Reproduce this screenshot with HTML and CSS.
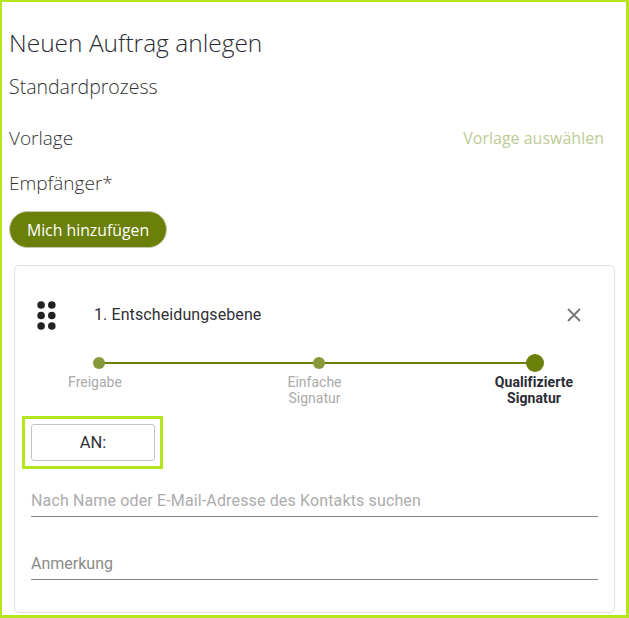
FILE: index.html
```html
<!DOCTYPE html>
<html lang="de">
<head>
<meta charset="utf-8">
<title>Neuen Auftrag anlegen</title>
<link rel="stylesheet" href="styles.css">
</head>
<body>
<main class="frame">
  <h1 class="title">Neuen Auftrag anlegen</h1>
  <h2 class="subtitle">Standardprozess</h2>
  <div class="template-row">
    <span class="label">Vorlage</span>
    <a class="template-link">Vorlage auswählen</a>
  </div>
  <div class="label recipients">Empfänger*</div>
  <button class="add-me" type="button">Mich hinzufügen</button>
  <section class="card">
    <header class="card-head">
      <svg class="drag" width="19" height="29" viewBox="0 0 19 29" aria-hidden="true">
        <circle cx="4.1" cy="4" r="3.8"/><circle cx="14.8" cy="4" r="3.8"/>
        <circle cx="4.1" cy="14.5" r="3.8"/><circle cx="14.8" cy="14.5" r="3.8"/>
        <circle cx="4.1" cy="25" r="3.8"/><circle cx="14.8" cy="25" r="3.8"/>
      </svg>
      <span class="level-name">1. Entscheidungsebene</span>
      <svg class="close" width="16" height="16" viewBox="0 0 16 16" aria-hidden="true">
        <path d="M2 2 14 14M14 2 2 14"/>
      </svg>
    </header>
    <div class="stepper">
      <div class="track"></div>
      <div class="step step-first"><span class="dot"></span><span class="step-label">Freigabe</span></div>
      <div class="step step-mid"><span class="dot"></span><span class="step-label">Einfache<br>Signatur</span></div>
      <div class="step active"><span class="dot"></span><span class="step-label">Qualifizierte<br>Signatur</span></div>
    </div>
    <div class="highlight"><button class="to-btn" type="button">AN:</button></div>
    <div class="field search">Nach Name oder E-Mail-Adresse des Kontakts suchen</div>
    <div class="field note">Anmerkung</div>
  </section>
</main>
</body>
</html>
```
FILE: styles.css
```css
* { box-sizing: border-box; }
html, body { margin: 0; padding: 0; background: #fff; }
body { width: 629px; height: 618px; overflow: hidden; }
.frame {
  width: 629px;
  height: 618px;
  border: solid #b5e61d;
  border-width: 2px 3px 3px 2px;
  padding: 0 11px 0 7px;
  font-family: "Open Sans", sans-serif;
  font-weight: 300;
  color: #333;
}
.title {
  margin: 24px 0 0;
  font-size: 24.5px;
  line-height: 33px;
  font-weight: 300;
  color: #2b2b33;
}
.subtitle {
  margin: 15px 0 0;
  font-size: 19.5px;
  line-height: 26px;
  font-weight: 300;
  color: #333;
}
.template-row {
  margin-top: 26px;
  padding-right: 11px;
  display: flex;
  justify-content: space-between;
  align-items: center;
}
.label { font-size: 19px; line-height: 25px; font-weight: 300; color: #333; }
.template-link { font-size: 16px; line-height: 25px; font-weight: 400; color: #bccb95; }
.recipients { margin-top: 20px; }
.add-me {
  display: block;
  margin-top: 15px;
  width: 158px;
  height: 37px;
  padding: 0;
  border: 1px solid #c4c8b4;
  border-radius: 19px;
  background: #6a8008;
  color: #fff;
  font-family: "Open Sans", sans-serif;
  font-size: 15.8px;
  font-weight: 500;
}
.card {
  margin: 17px 0 0 5px;
  width: 601px;
  height: 348px;
  border: 1px solid #e0e0e0;
  border-radius: 5px;
  padding: 35px 16px 0;
  font-family: Roboto, sans-serif;
  font-weight: 400;
}
.card-head { display: flex; align-items: center; height: 28px; padding: 0 0 0 6px; }
.drag { fill: #222; flex: none; align-self: flex-start; }
.level-name { margin: 0 0 2px 38px; font-size: 16px; letter-spacing: .1px; color: #2f2f36; }
.close { margin-left: auto; margin-right: 16px; fill: none; stroke: #777; stroke-width: 1.8; }
.stepper {
  position: relative;
  display: flex;
  justify-content: space-between;
  margin: 25px 0 0 18px;
  width: 536px;
}
.track {
  position: absolute;
  left: 50px;
  right: 50px;
  top: 8px;
  height: 2px;
  background: #6a8008;
}
.step {
  position: relative;
  width: 100px;
  display: flex;
  flex-direction: column;
  align-items: center;
  font-size: 14px;
  line-height: 16px;
  text-align: center;
  color: #aaa;
}
.step-mid { width: 62px; margin-left: 4px; }
.step .dot {
  width: 12px;
  height: 12px;
  margin: 3px 0 5px;
  border-radius: 50%;
  background: #87993b;
}
.step-label { display: block; white-space: nowrap; }
.step-first .step-label { margin-right: 8px; }
.step-mid .step-label { margin-right: 9px; }
.active .step-label { margin-right: 2px; }
.active { color: #2b2b33; font-weight: 700; letter-spacing: .1px; }
.step.active .dot { width: 18px; height: 18px; margin: 0 0 2px; background: #6a8008; }
.highlight {
  width: 141px;
  height: 53px;
  margin: 10px 0 0 -9px;
  border: 3px solid #b5e61d;
  padding: 5px 6px;
}
.to-btn {
  display: block;
  width: 124px;
  height: 37px;
  padding: 0;
  border: 1px solid #c4c4c4;
  border-radius: 3px;
  background: #fff;
  font-family: Roboto, sans-serif;
  font-size: 16.5px;
  color: #2f2f36;
}
.field {
  width: 567px;
  border-bottom: 1px solid #8a8a8a;
  font-size: 16px;
  line-height: 24px;
  padding-bottom: 3px;
}
.search { margin-top: 20px; color: #acacac; letter-spacing: .14px; }
.note { margin-top: 35px; color: #8a8a8a; }
```
